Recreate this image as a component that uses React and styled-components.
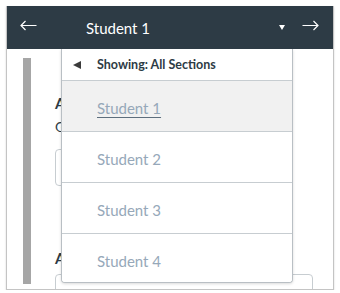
import React from "react";
import styled, { createGlobalStyle } from "styled-components";

const students = ["Student 1", "Student 2", "Student 3", "Student 4"];

const GlobalStyle = createGlobalStyle`
  body {
    margin: 0;
    background: #fff;
    font-family: "Lato", "Noto Sans", sans-serif;
  }
`;

const LeftArrow = () => (
  <svg width="17" height="11" viewBox="0 0 17 11">
    <path d="M16.5 5.5H1M5.5 1L1 5.5L5.5 10" fill="none" stroke="#fff" strokeWidth="1.2" />
  </svg>
);

const RightArrow = () => (
  <svg width="17" height="11" viewBox="0 0 17 11">
    <path d="M0.5 5.5H16M11.5 1L16 5.5L11.5 10" fill="none" stroke="#fff" strokeWidth="1.2" />
  </svg>
);

const App = () => {
  return (
    <>
      <GlobalStyle />
      <Frame>
        <Header>
          <IconSlot>
            <LeftArrow />
          </IconSlot>
          <CurrentName>Student 1</CurrentName>
          <Caret />
          <IconSlot>
            <RightArrow />
          </IconSlot>
        </Header>
        <Body>
          <SideBar />
          <Form>
            <Label>Assignment Details</Label>
            <Hint>Grade out of 10 points</Hint>
            <Input width="200px" />
            <Label gap="63px">Assessment</Label>
            <Input gap="7px" />
          </Form>
          <Menu>
            <MenuHead>
              <BackTriangle />
              <span>Showing: All Sections</span>
            </MenuHead>
            {students.map((name, i) => (
              <MenuRow key={name} active={i === 0}>
                <StudentLink active={i === 0}>{name}</StudentLink>
              </MenuRow>
            ))}
          </Menu>
        </Body>
      </Frame>
    </>
  );
};

export default App;

const Frame = styled.div`
  position: relative;
  margin: 6px 0 0 6px;
  width: 328px;
  height: 284px;
  box-sizing: border-box;
  border: 1px solid #c4c4c4;
  border-top: none;
  box-shadow: 0 1px 2px rgba(0, 0, 0, 0.15);
  overflow: hidden;
`;

const Header = styled.div`
  height: 43px;
  background: #2d3b45;
  display: flex;
  align-items: center;
  padding: 0 14px 0 13px;
  color: #fff;
`;

const IconSlot = styled.div`
  display: flex;
  align-items: center;
  margin-top: -4px;
`;

const CurrentName = styled.div`
  flex: 1;
  margin-left: 49px;
  font-size: 15px;
  color: #fff;
`;

const Caret = styled.div`
  width: 0;
  height: 0;
  border-left: 3.5px solid transparent;
  border-right: 3.5px solid transparent;
  border-top: 5px solid #fff;
  margin-right: 17px;
`;

const Body = styled.div`
  position: relative;
  display: flex;
  align-items: stretch;
  height: 240px;
  overflow: hidden;
`;

const SideBar = styled.div`
  flex-shrink: 0;
  width: 8px;
  margin: 9px 0 5px 16px;
  background: #a6a6a6;
`;

const Form = styled.div`
  flex-shrink: 0;
  margin-left: 24px;
  padding-top: 45px;
  width: 258px;
`;

const Label = styled.div`
  margin-top: ${(p) => p.gap || "0"};
  font-size: 15px;
  font-weight: 700;
  color: #2d3b45;
  line-height: 18px;
`;

const Hint = styled.div`
  font-size: 14px;
  color: #2d3b45;
  margin-top: 6px;
  line-height: 17px;
`;

const Input = styled.div`
  width: ${(p) => p.width || "100%"};
  height: 37px;
  margin-top: ${(p) => p.gap || "14px"};
  border: 1px solid #c7cdd1;
  border-radius: 4px;
  box-sizing: border-box;
`;

const Menu = styled.div`
  position: absolute;
  left: 54px;
  top: 0;
  width: 232px;
  height: 234px;
  box-sizing: border-box;
  background: #fff;
  border: 1px solid #b9bfc4;
  border-top: none;
  border-radius: 0 0 4px 4px;
  box-shadow: 0 1px 3px rgba(0, 0, 0, 0.15);
  overflow: hidden;
`;

const MenuHead = styled.div`
  height: 31px;
  display: flex;
  align-items: center;
  padding-left: 11px;
  border-bottom: 1px solid #c7cdd1;
  font-size: 12.5px;
  font-weight: 700;
  color: #2d3b45;

  span {
    margin-left: 16px;
  }
`;

const BackTriangle = styled.div`
  width: 0;
  height: 0;
  border-top: 4px solid transparent;
  border-bottom: 4px solid transparent;
  border-right: 8px solid #3b3b3b;
`;

const MenuRow = styled.div`
  height: 46px;
  padding: 4px 0 0 35px;
  display: flex;
  align-items: center;
  border-bottom: 1px solid #c7cdd1;
  background: ${(p) => (p.active ? "#f1f1f1" : "#fff")};

  &:last-child {
    border-bottom: none;
  }
`;

const StudentLink = styled.span`
  font-size: 15px;
  color: #96a8b9;
  text-decoration: ${(p) => (p.active ? "underline" : "none")};
  text-decoration-color: #5d6e7d;
  text-underline-offset: 3px;
`;
